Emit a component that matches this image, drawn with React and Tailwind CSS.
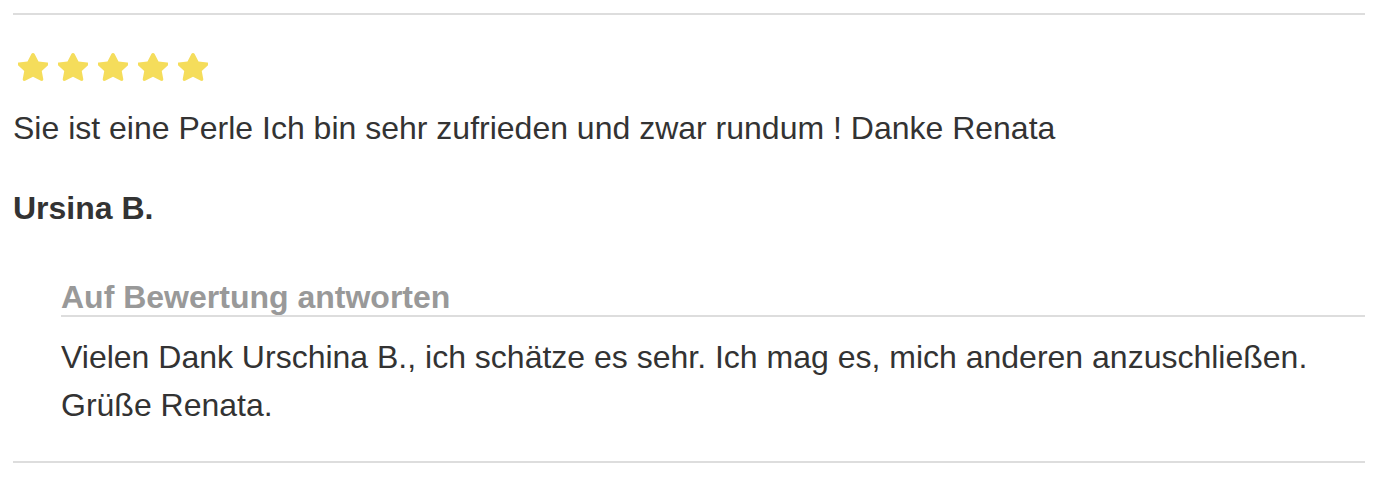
import React from "react";

const Star = () => (
    <svg width="30" height="28" viewBox="1.9 1.2 20.2 20.2" preserveAspectRatio="none" className="block">
        <path
            d="M12 1.2c.5 0 .9.3 1.1.7l2.6 5.4 5.9.8c.9.1 1.3 1.3.6 1.9l-4.3 4.1 1 5.9c.2.9-.8 1.6-1.6 1.2L12 18.4l-5.3 2.8c-.8.4-1.8-.3-1.6-1.2l1-5.9-4.3-4.1c-.7-.6-.3-1.8.6-1.9l5.9-.8 2.6-5.4c.2-.4.6-.7 1.1-.7z"
            fill="#f5dd5b"
        />
    </svg>
);

const App = () => {
    return (
        <div className="bg-white min-h-screen pl-[13px] pr-[18px] pt-[13px] font-['Liberation_Sans',Arial,sans-serif] text-[#333]">
            <div className="border-t-2 border-[#dddddd]">
                <div className="flex gap-[10px] mt-[38px] pl-[5px]">
                    <Star />
                    <Star />
                    <Star />
                    <Star />
                    <Star />
                </div>
                <p className="mt-[23px] text-[32px] leading-[48px]">
                    Sie ist eine Perle Ich bin sehr zufrieden und zwar rundum ! Danke Renata
                </p>
                <p className="mt-[32px] text-[32px] leading-[48px] font-bold">Ursina B.</p>

                <div className="ml-[48px] mt-[47px]">
                    <h3 className="text-[32px] leading-[36px] font-bold text-[#999999] border-b-2 border-[#dddddd]">
                        Auf Bewertung antworten
                    </h3>
                    <p className="pt-[16px] text-[32px] leading-[48px]">
                        Vielen Dank Urschina B., ich schätze es sehr. Ich mag es, mich anderen anzuschließen.
                        <br />
                        Grüße Renata.
                    </p>
                </div>

                <div className="mt-[32px] border-t-2 border-[#dddddd]" />
            </div>
        </div>
    );
};

export default App;
